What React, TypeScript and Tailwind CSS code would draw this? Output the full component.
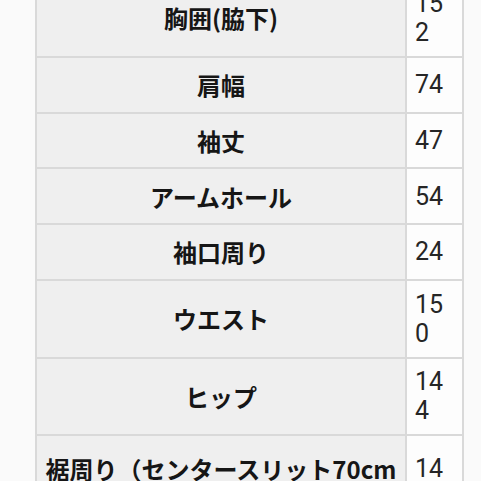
const ROWS: { label: string; value: string; tall?: boolean }[] = [
  { label: '胸囲(脇下)', value: '152', tall: true },
  { label: '肩幅', value: '74' },
  { label: '袖丈', value: '47' },
  { label: 'アームホール', value: '54' },
  { label: '袖口周り', value: '24' },
  { label: 'ウエスト', value: '150', tall: true },
  { label: 'ヒップ', value: '144', tall: true },
];

const labelCell =
  "border-2 border-[#d9d9d9] bg-[#efefef] px-[8px] text-center align-middle font-['Noto_Sans_CJK_JP',sans-serif] text-[24px] font-bold leading-[29px] text-[#161616]";
const valueCell =
  "break-all border-2 border-[#d9d9d9] bg-[#fdfdfd] py-0 pl-[8px] pr-[7px] align-middle font-['Roboto','Noto_Sans_CJK_JP',sans-serif] text-[25px] leading-[29px] text-[#262626]";

export default function App() {
  return (
    <div className="h-[481px] w-[481px] overflow-hidden bg-[#fafafa] pl-[35px]">
      <table className="-mt-[22px] w-[427px] table-fixed border-collapse">
        <colgroup>
          <col className="w-[370px]" />
          <col className="w-[57px]" />
        </colgroup>
        <tbody>
          {ROWS.map((row) => (
            <tr key={row.label} className={row.tall ? 'h-[77.75px]' : 'h-[55.75px]'}>
              <td className={labelCell}>{row.label}</td>
              <td className={valueCell}>{row.value}</td>
            </tr>
          ))}
          <tr className="h-[95px]">
            <td className={labelCell}>
              <span className="whitespace-nowrap">裾周り（センタースリット70cm</span>
              <wbr />）
            </td>
            <td className={valueCell}>
              14
              <br />
              &nbsp;
            </td>
          </tr>
        </tbody>
      </table>
    </div>
  );
}
